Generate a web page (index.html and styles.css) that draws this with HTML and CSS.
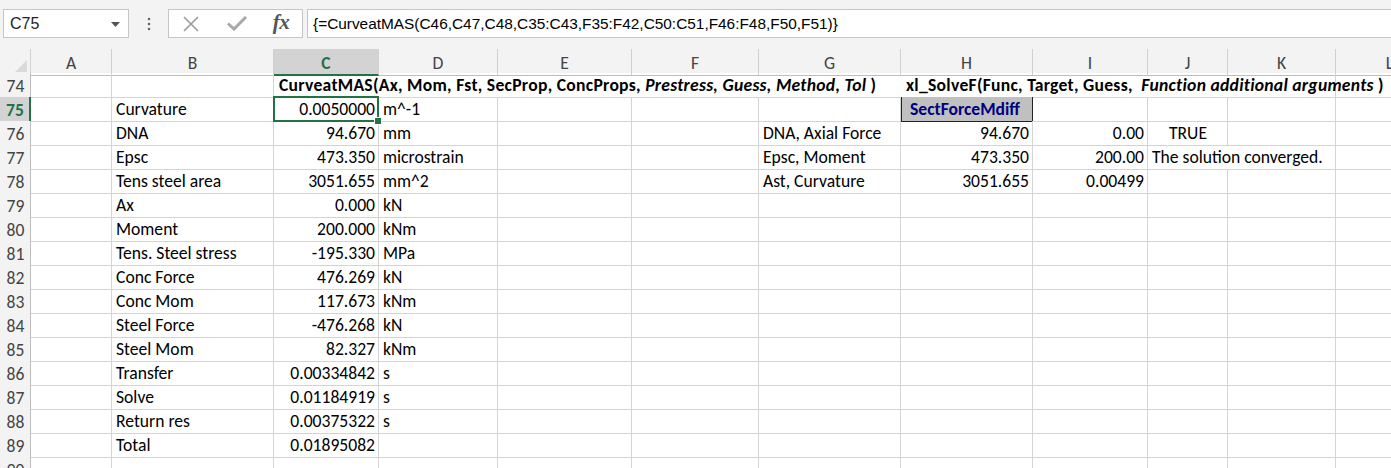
FILE: index.html
```html
<!DOCTYPE html>
<html>
<head>
<meta charset="utf-8">
<link rel="stylesheet" href="styles.css">
</head>
<body>
<div class="toolbar">
  <div class="namebox"><span class="nb-text">C75</span><svg class="nb-arrow" width="9" height="5" viewBox="0 0 9 5"><path d="M0 0H9L4.5 5Z" fill="#555"/></svg></div>
  <div class="dots"><svg width="4" height="14" viewBox="0 0 4 14"><circle cx="2" cy="2" r="1.3" fill="#666"/><circle cx="2" cy="7" r="1.3" fill="#666"/><circle cx="2" cy="12" r="1.3" fill="#666"/></svg></div>
  <div class="fxbox">
    <span class="fx-btn b1"><svg width="16" height="16" viewBox="0 0 16 16"><path d="M1 1L15 15M15 1L1 15" stroke="#9a9a9a" stroke-width="1.6"/></svg></span>
    <span class="fx-btn b2"><svg width="20" height="15" viewBox="0 0 20 15"><path d="M1 7.5L7 13L19 1" stroke="#a8a8a8" stroke-width="3" fill="none"/></svg></span>
    <span class="fx-btn b3"><span class="fx-label">fx</span></span>
  </div>
  <div class="formula">{=CurveatMAS(C46,C47,C48,C35:C43,F35:F42,C50:C51,F46:F48,F50,F51)}</div>
</div>

<div class="sheet">
  <div class="row head">
    <div class="corner"><svg width="12" height="12" viewBox="0 0 12 12"><path d="M12 0V12H0Z" fill="#dadada"/></svg></div>
    <div class="ch">A</div><div class="ch">B</div><div class="ch sel">C</div><div class="ch">D</div><div class="ch">E</div><div class="ch">F</div><div class="ch">G</div><div class="ch">H</div><div class="ch">I</div><div class="ch">J</div><div class="ch">K</div><div class="ch">L</div>
  </div>

  <div class="row">
    <div class="rh">74</div><div class="c"></div><div class="c"></div>
    <div class="c ov span5 bold"><span>CurveatMAS(Ax, Mom, Fst, SecProp, ConcProps, <i>Prestress, Guess, Method, Tol</i> )</span></div>
    <div class="c ov span4 bold"><span>xl_SolveF(Func, Target, Guess,&nbsp; <i>Function additional arguments</i> )</span></div>
    <div class="c"></div>
  </div>

  <div class="row">
    <div class="rh rsel">75</div><div class="c"></div><div class="c">Curvature</div>
    <div class="c r active">0.0050000</div><div class="c">m^-1</div><div class="c"></div><div class="c"></div><div class="c"></div>
    <div class="c fn">SectForceMdiff</div><div class="c"></div><div class="c"></div><div class="c"></div><div class="c"></div>
  </div>

  <div class="row">
    <div class="rh">76</div><div class="c"></div><div class="c">DNA</div>
    <div class="c r">94.670</div><div class="c">mm</div><div class="c"></div><div class="c"></div><div class="c">DNA, Axial Force</div>
    <div class="c r">94.670</div><div class="c r">0.00</div><div class="c ctr">TRUE</div><div class="c"></div><div class="c"></div>
  </div>

  <div class="row">
    <div class="rh">77</div><div class="c"></div><div class="c">Epsc</div>
    <div class="c r">473.350</div><div class="c">microstrain</div><div class="c"></div><div class="c"></div><div class="c">Epsc, Moment</div>
    <div class="c r">473.350</div><div class="c r">200.00</div><div class="c ov span2">The solution converged.</div><div class="c"></div>
  </div>

  <div class="row">
    <div class="rh">78</div><div class="c"></div><div class="c">Tens steel area</div>
    <div class="c r">3051.655</div><div class="c">mm^2</div><div class="c"></div><div class="c"></div><div class="c">Ast, Curvature</div>
    <div class="c r">3051.655</div><div class="c r">0.00499</div><div class="c"></div><div class="c"></div><div class="c"></div>
  </div>

  <div class="row">
    <div class="rh">79</div><div class="c"></div><div class="c">Ax</div>
    <div class="c r">0.000</div><div class="c">kN</div><div class="c"></div><div class="c"></div><div class="c"></div>
    <div class="c"></div><div class="c"></div><div class="c"></div><div class="c"></div><div class="c"></div>
  </div>

  <div class="row">
    <div class="rh">80</div><div class="c"></div><div class="c">Moment</div>
    <div class="c r">200.000</div><div class="c">kNm</div><div class="c"></div><div class="c"></div><div class="c"></div>
    <div class="c"></div><div class="c"></div><div class="c"></div><div class="c"></div><div class="c"></div>
  </div>

  <div class="row">
    <div class="rh">81</div><div class="c"></div><div class="c">Tens. Steel stress</div>
    <div class="c r">-195.330</div><div class="c">MPa</div><div class="c"></div><div class="c"></div><div class="c"></div>
    <div class="c"></div><div class="c"></div><div class="c"></div><div class="c"></div><div class="c"></div>
  </div>

  <div class="row">
    <div class="rh">82</div><div class="c"></div><div class="c">Conc Force</div>
    <div class="c r">476.269</div><div class="c">kN</div><div class="c"></div><div class="c"></div><div class="c"></div>
    <div class="c"></div><div class="c"></div><div class="c"></div><div class="c"></div><div class="c"></div>
  </div>

  <div class="row">
    <div class="rh">83</div><div class="c"></div><div class="c">Conc Mom</div>
    <div class="c r">117.673</div><div class="c">kNm</div><div class="c"></div><div class="c"></div><div class="c"></div>
    <div class="c"></div><div class="c"></div><div class="c"></div><div class="c"></div><div class="c"></div>
  </div>

  <div class="row">
    <div class="rh">84</div><div class="c"></div><div class="c">Steel Force</div>
    <div class="c r">-476.268</div><div class="c">kN</div><div class="c"></div><div class="c"></div><div class="c"></div>
    <div class="c"></div><div class="c"></div><div class="c"></div><div class="c"></div><div class="c"></div>
  </div>

  <div class="row">
    <div class="rh">85</div><div class="c"></div><div class="c">Steel Mom</div>
    <div class="c r">82.327</div><div class="c">kNm</div><div class="c"></div><div class="c"></div><div class="c"></div>
    <div class="c"></div><div class="c"></div><div class="c"></div><div class="c"></div><div class="c"></div>
  </div>

  <div class="row">
    <div class="rh">86</div><div class="c"></div><div class="c">Transfer</div>
    <div class="c r">0.00334842</div><div class="c">s</div><div class="c"></div><div class="c"></div><div class="c"></div>
    <div class="c"></div><div class="c"></div><div class="c"></div><div class="c"></div><div class="c"></div>
  </div>

  <div class="row">
    <div class="rh">87</div><div class="c"></div><div class="c">Solve</div>
    <div class="c r">0.01184919</div><div class="c">s</div><div class="c"></div><div class="c"></div><div class="c"></div>
    <div class="c"></div><div class="c"></div><div class="c"></div><div class="c"></div><div class="c"></div>
  </div>

  <div class="row">
    <div class="rh">88</div><div class="c"></div><div class="c">Return res</div>
    <div class="c r">0.00375322</div><div class="c">s</div><div class="c"></div><div class="c"></div><div class="c"></div>
    <div class="c"></div><div class="c"></div><div class="c"></div><div class="c"></div><div class="c"></div>
  </div>

  <div class="row">
    <div class="rh">89</div><div class="c"></div><div class="c">Total</div>
    <div class="c r">0.01895082</div><div class="c"></div><div class="c"></div><div class="c"></div><div class="c"></div>
    <div class="c"></div><div class="c"></div><div class="c"></div><div class="c"></div><div class="c"></div>
  </div>

  <div class="row">
    <div class="rh">90</div><div class="c"></div><div class="c"></div>
    <div class="c"></div><div class="c"></div><div class="c"></div><div class="c"></div><div class="c"></div>
    <div class="c"></div><div class="c"></div><div class="c"></div><div class="c"></div><div class="c"></div>
  </div>
</div>
</body>
</html>
```

FILE: styles.css
```css
* { box-sizing: border-box; }
html, body {
  margin: 0;
  padding: 0;
  background: #ffffff;
  overflow: hidden;
  width: 1391px;
  height: 468px;
}
body {
  font-family: "Carlito", "Liberation Sans", Arial, sans-serif;
  font-size: 17.6px;
  color: #000;
}

/* ---------- formula bar ---------- */
.toolbar {
  height: 49px;
  background: #f3f3f3;
  display: flex;
  align-items: flex-start;
  padding: 9px 0 0 3px;
  overflow: hidden;
}
.namebox {
  width: 126px;
  height: 29px;
  background: #fff;
  border: 1px solid #c6c6c6;
  display: flex;
  align-items: center;
  justify-content: space-between;
  padding: 0 8px 0 6px;
  font-family: "Liberation Sans", Arial, sans-serif;
  font-size: 16px;
  color: #222;
}
.nb-arrow { margin-top: 1px; }
.dots {
  width: 39px;
  height: 29px;
  display: flex;
  align-items: center;
  justify-content: center;
}
.fxbox {
  width: 135px;
  height: 29px;
  background: #fff;
  border: 1px solid #c6c6c6;
  display: flex;
  align-items: center;
}
.fx-btn {
  display: flex;
  align-items: center;
  justify-content: center;
  height: 27px;
}
.b1 { width: 43px; }
.b2 { width: 50px; }
.b3 { width: 38px; }
.fx-label {
  font-family: "Liberation Serif", "DejaVu Serif", serif;
  font-style: italic;
  font-weight: bold;
  font-size: 21px;
  color: #555;
  letter-spacing: -0.5px;
  margin-top: -2px;
}
.formula {
  flex: 1;
  margin-left: 4px;
  margin-right: -3px;
  height: 29px;
  background: #fff;
  border: 1px solid #c6c6c6;
  padding: 0 0 0 5px;
  display: flex;
  align-items: center;
  font-family: "Liberation Sans", Arial, sans-serif;
  font-size: 15.4px;
  color: #000;
  white-space: nowrap;
}

/* ---------- grid ---------- */
.sheet {
  display: flex;
  flex-direction: column;
}
.row {
  display: grid;
  grid-template-columns: 31px 81px 162px 105px 119px 134px 127px 142px 132px 115px 80px 108px 108px;
  height: 24px;
}
.row.head {
  height: 24px;
  background: #f3f3f3;
}
.corner {
  border-right: 1px solid #d0d0d0;
  border-bottom: 1px solid #bdbdbd;
  display: flex;
  align-items: flex-end;
  justify-content: flex-end;
  padding: 0 3px 3px 0;
}
.ch {
  border-right: 1px solid #d0d0d0;
  border-bottom: 1px solid #bdbdbd;
  display: flex;
  align-items: center;
  justify-content: center;
  color: #444;
  font-size: 17.6px;
  padding-top: 2px;
}
.ch.sel {
  background: #d3d3d3;
  color: #217346;
  font-weight: bold;
  border-bottom: 2px solid #217346;
  padding-top: 3px;
}
.rh {
  background: #f3f3f3;
  border-right: 1px solid #bdbdbd;
  border-bottom: 1px solid #d4d4d4;
  color: #444;
  display: flex;
  align-items: center;
  justify-content: center;
  font-size: 17.6px;
  padding: 2px 0 0 1px;
}
.rh.rsel {
  background: #d3d3d3;
  color: #217346;
  font-weight: bold;
  border-right: 2px solid #217346;
}
.c {
  border-right: 1px solid #d4d4d4;
  border-bottom: 1px solid #d4d4d4;
  display: flex;
  align-items: center;
  padding: 2px 3px 0 4px;
  white-space: nowrap;
  overflow: hidden;
  line-height: 1;
}
.c.r { justify-content: flex-end; }
.c.ctr { justify-content: center; }
.c.ov { overflow: visible; }
.span5 { grid-column: span 5; border-right: none; }
.span4 { grid-column: span 4; }
.span2 { grid-column: span 2; }
.bold { font-weight: bold; padding-left: 5px; letter-spacing: 0.28px; }
.bold i { font-style: italic; }

.c.fn {
  background: #c0c0c0;
  color: #000080;
  font-weight: bold;
  border-left: 1px solid #222;
  border-right: 1px solid #222;
  border-bottom: 1px solid #222;
  padding-left: 8px;
}

.c.active {
  position: relative;
  overflow: visible;
}
.c.active::before {
  content: "";
  position: absolute;
  left: -1px;
  top: -1px;
  right: -1px;
  bottom: -1px;
  border: 2px solid #217346;
  pointer-events: none;
}
.c.active::after {
  content: "";
  position: absolute;
  right: -4px;
  bottom: -4px;
  width: 6px;
  height: 6px;
  background: #217346;
  border: 1px solid #fff;
}
```
